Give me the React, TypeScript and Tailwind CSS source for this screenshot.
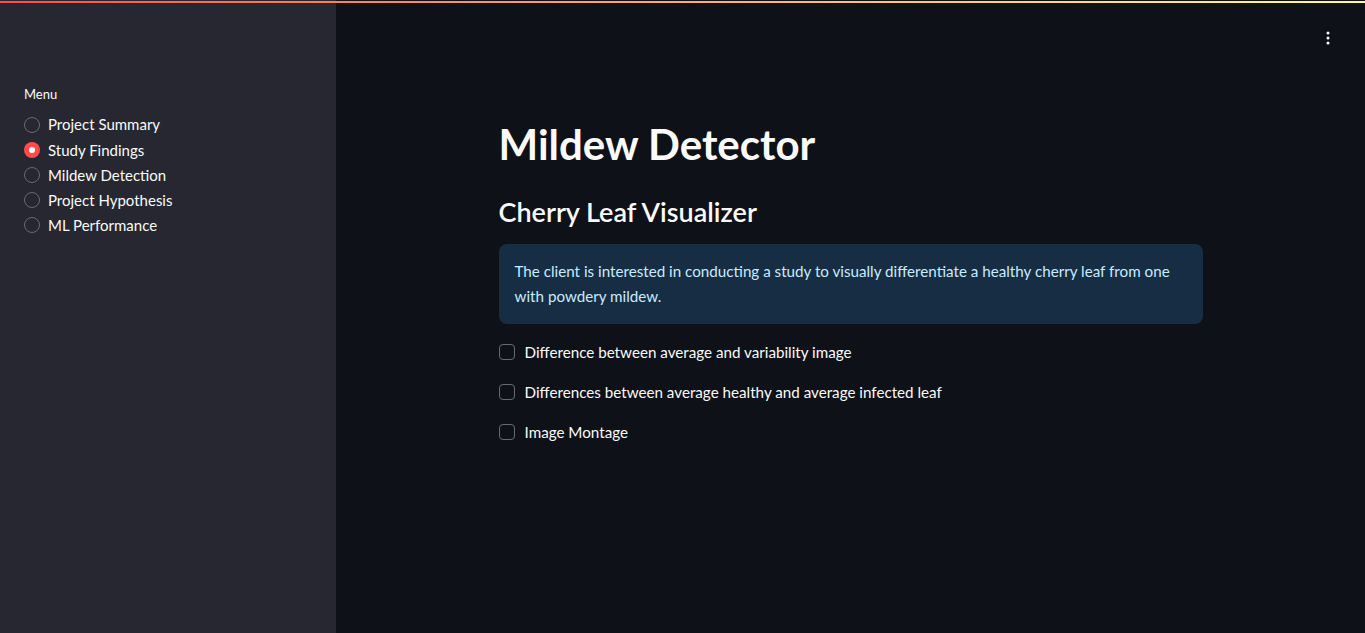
import { useState } from "react";

const pages = [
  "Project Summary",
  "Study Findings",
  "Mildew Detection",
  "Project Hypothesis",
  "ML Performance",
];

const options = [
  "Difference between average and variability image",
  "Differences between average healthy and average infected leaf",
  "Image Montage",
];

const KebabIcon = () => (
  <svg width="16" height="16" viewBox="0 0 16 16" fill="#fafafa">
    <circle cx="8" cy="3" r="1.5" />
    <circle cx="8" cy="8" r="1.5" />
    <circle cx="8" cy="13" r="1.5" />
  </svg>
);

export default function App() {
  const [page, setPage] = useState("Study Findings");
  const [checked, setChecked] = useState<Record<string, boolean>>({});

  return (
    <div
      className="relative flex h-[633px] w-full overflow-hidden bg-[#0e1117] text-[#fafafa]"
      style={{ fontFamily: "Lato, 'Noto Sans', sans-serif" }}
    >
      <div className="absolute left-0 right-0 top-[1px] h-[2px] bg-gradient-to-r from-[#ff4b4b] to-[#fffd80]" />

      <aside className="w-[336px] flex-shrink-0 bg-[#262730] px-6 pt-[86px]">
        <p className="mb-[10px] text-[13px] leading-[16px] text-[#fafafa]">Menu</p>
        <div className="flex flex-col">
          {pages.map((p) => {
            const active = page === p;
            return (
              <button
                key={p}
                onClick={() => setPage(p)}
                className="flex h-[25.2px] items-center gap-2 text-left text-[15px]"
              >
                {active ? (
                  <span className="flex h-4 w-4 items-center justify-center rounded-full bg-[#ff4b4b]">
                    <span className="h-[6px] w-[6px] rounded-full bg-white" />
                  </span>
                ) : (
                  <span className="h-4 w-4 rounded-full border border-[#686a72]" />
                )}
                <span>{p}</span>
              </button>
            );
          })}
        </div>
      </aside>

      <main className="relative flex flex-1 justify-center">
        <button className="absolute right-[29px] top-[30px]">
          <KebabIcon />
        </button>

        <div className="w-[736px] px-4 pt-[116px]">
          <h1 className="text-[42px] font-bold leading-[56px]">Mildew Detector</h1>
          <h3 className="mt-[22px] text-[27px] font-semibold leading-[36px]">Cherry Leaf Visualizer</h3>

          <div className="mt-[14px] rounded-lg bg-[#172d43] px-4 py-[15px] text-[15.2px] leading-[25px] text-[#c7ebff]">
            The client is interested in conducting a study to visually differentiate a healthy cherry leaf from one
            with powdery mildew.
          </div>

          <div className="mt-2 flex flex-col">
            {options.map((o) => (
              <label key={o} className="flex h-10 cursor-pointer items-center gap-[10px] text-[15.2px]">
                <input
                  type="checkbox"
                  checked={!!checked[o]}
                  onChange={() => setChecked({ ...checked, [o]: !checked[o] })}
                  className="hidden"
                />
                <span
                  className={`h-4 w-4 rounded-[4px] border ${
                    checked[o] ? "border-[#ff4b4b] bg-[#ff4b4b]" : "border-[#686a72]"
                  }`}
                />
                <span>{o}</span>
              </label>
            ))}
          </div>
        </div>
      </main>
    </div>
  );
}
